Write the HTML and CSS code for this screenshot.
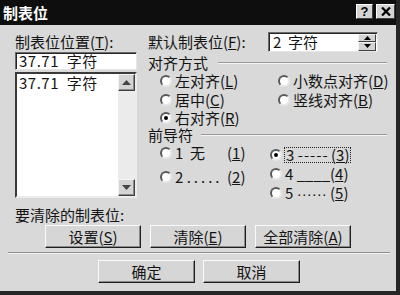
FILE: index.html
```html
<!DOCTYPE html>
<html lang="zh-CN">
<head>
<meta charset="utf-8">
<title>制表位</title>
<link rel="stylesheet" href="styles.css">
</head>
<body>
<div class="win">
  <div class="titlebar">
    <span class="title">制表位</span>
    <div class="tb-btns">
      <span class="tb-btn">?</span>
      <span class="tb-btn x">
        <svg width="10" height="9" viewBox="0 0 10 9"><path d="M1 0.5 L9 8.5 M9 0.5 L1 8.5" stroke="#000" stroke-width="2.2"/></svg>
      </span>
    </div>
  </div>
  <div class="body">
    <div class="top">
      <div class="left">
        <div class="lbl">制表位位置(<u>T</u>):</div>
        <div class="field">37.71&nbsp; 字符</div>
        <div class="listbox">
          <div class="items"><div class="item">37.71&nbsp; 字符</div></div>
          <div class="vscroll">
            <span class="sbtn"><svg width="9" height="5" viewBox="0 0 9 5"><path d="M4.5 0 L9 5 L0 5 Z" fill="#444"/></svg></span>
            <span class="track"></span>
            <span class="sbtn"><svg width="9" height="5" viewBox="0 0 9 5"><path d="M0 0 L9 0 L4.5 5 Z" fill="#444"/></svg></span>
          </div>
        </div>
      </div>
      <div class="right">
        <div class="defrow">
          <span class="deflbl">默认制表位(<u>F</u>):</span>
          <div class="spin">
            <span class="spinval">2&nbsp; 字符</span>
            <span class="spinbtns">
              <span class="spb"><svg width="7" height="4" viewBox="0 0 7 4"><path d="M3.5 0 L7 4 L0 4 Z" fill="#000"/></svg></span>
              <span class="spb"><svg width="7" height="4" viewBox="0 0 7 4"><path d="M0 0 L7 0 L3.5 4 Z" fill="#000"/></svg></span>
            </span>
          </div>
        </div>
        <div class="grphead"><span>对齐方式</span><span class="gline"></span></div>
        <div class="aligngrid">
          <div class="radio"><span class="rb"></span>左对齐(<u>L</u>)</div>
          <div class="radio c2"><span class="rb"></span>小数点对齐(<u>D</u>)</div>
          <div class="radio"><span class="rb"></span>居中(<u>C</u>)</div>
          <div class="radio c2"><span class="rb"></span>竖线对齐(<u>B</u>)</div>
          <div class="radio"><span class="rb on"></span>右对齐(<u>R</u>)</div>
        </div>
        <div class="grphead g2"><span>前导符</span><span class="gline"></span></div>
        <div class="leaders">
          <div class="lcol lc1">
            <div class="radio"><span class="rb"></span><span class="lt">1&nbsp; 无</span><span class="lk">(<u>1</u>)</span></div>
            <div class="radio"><span class="rb"></span><span class="lt">2 <span class="dots">.....</span></span><span class="lk">(<u>2</u>)</span></div>
          </div>
          <div class="lcol lc2">
            <div class="radio"><span class="rb on"></span><span class="focus"><span class="lt">3 <span class="dash">-----</span></span><span class="lk">(<u>3</u>)</span></span></div>
            <div class="radio"><span class="rb"></span><span class="lt">4 <span class="unds">____</span></span><span class="lk">(<u>4</u>)</span></div>
            <div class="radio"><span class="rb"></span><span class="lt">5 <span class="mdots">······</span></span><span class="lk">(<u>5</u>)</span></div>
          </div>
        </div>
      </div>
    </div>
    <div class="clrlbl">要清除的制表位:</div>
    <div class="btnrow">
      <span class="btn">设置(<u>S</u>)</span>
      <span class="btn">清除(<u>E</u>)</span>
      <span class="btn">全部清除(<u>A</u>)</span>
    </div>
    <div class="sep"></div>
    <div class="btnrow2">
      <span class="btn">确定</span>
      <span class="btn">取消</span>
    </div>
  </div>
</div>
</body>
</html>
```

FILE: styles.css
```css
* { box-sizing: border-box; }
html, body { margin: 0; padding: 0; }
body {
  background: #262626;
  width: 400px;
  height: 295px;
  overflow: hidden;
  font-family: "Noto Sans CJK SC", "Noto Sans", sans-serif;
  font-size: 15px;
  color: #141414;
}
u { text-decoration: underline; text-underline-offset: 1px; text-decoration-thickness: 1px; }
.win {
  width: 396px;
  height: 291px;
  background: #d9d9d9;
  display: flex;
  flex-direction: column;
}
.titlebar {
  height: 25px;
  background: #0e0e0e;
  display: flex;
  align-items: center;
  justify-content: space-between;
  padding: 0 1px 0 3px;
}
.title {
  color: #fff;
  font-weight: bold;
  font-size: 15px;
  line-height: 20px;
}
.tb-btns { display: flex; gap: 3px; margin-top: -2px; }
.tb-btn {
  width: 17px;
  height: 15px;
  background: #d4d4d4;
  border: 1px solid;
  border-color: #fff #404040 #404040 #fff;
  display: flex;
  align-items: center;
  justify-content: center;
  font-family: "Liberation Sans", sans-serif;
  font-weight: bold;
  font-size: 13px;
  line-height: 13px;
  color: #000;
}
.tb-btn.x { width: 19px; }
.body {
  flex: 1;
  padding-left: 15px;
  display: flex;
  flex-direction: column;
}
.top {
  height: 176px;
  display: flex;
}
.left {
  width: 122px;
  padding-top: 8px;
  display: flex;
  flex-direction: column;
}
.lbl { line-height: 18px; height: 18px; }
.field {
  margin-top: 1px;
  height: 18px;
  background: #fff;
  border: 1px solid;
  border-color: #6a6a6a #e6e6e6 #e6e6e6 #6a6a6a;
  box-shadow: inset 1px 1px 0 #262626;
  line-height: 16px;
  padding-left: 3px;
  letter-spacing: 0.5px;
}
.listbox {
  margin-top: 2px;
  height: 126px;
  background: #fff;
  border: 2px solid;
  border-color: #3a3a3a #ececec #ececec #3a3a3a;
  display: flex;
}
.items { flex: 1; padding: 1px 0 0 2px; letter-spacing: 0.5px; }
.item { line-height: 16px; }
.vscroll {
  width: 17px;
  display: flex;
  flex-direction: column;
  background: #ebebeb;
}
.track { flex: 1; }
.sbtn {
  height: 17px;
  background: #d4d4d4;
  border: 1px solid;
  border-color: #f4f4f4 #404040 #404040 #f4f4f4;
  box-shadow: inset -1px -1px 0 #8a8a8a;
  display: flex;
  align-items: center;
  justify-content: center;
}
.right {
  margin-left: 11px;
  width: 239px;
  display: flex;
  flex-direction: column;
}
.defrow {
  margin-top: 7px;
  height: 20px;
  display: flex;
  align-items: center;
}
.deflbl { width: 120px; line-height: 18px; }
.spin {
  width: 110px;
  height: 20px;
  background: #fff;
  border: 1px solid;
  border-color: #6a6a6a #e6e6e6 #e6e6e6 #6a6a6a;
  box-shadow: inset 1px 1px 0 #262626;
  display: flex;
  align-items: center;
  justify-content: space-between;
  padding: 1px 1px 1px 4px;
}
.spinval { line-height: 16px; }
.spinbtns { width: 18px; height: 17px; display: flex; flex-direction: column; }
.spb {
  flex: 1;
  background: #d4d4d4;
  border: 1px solid;
  border-color: #f4f4f4 #404040 #404040 #f4f4f4;
  display: flex;
  align-items: center;
  justify-content: center;
}
.grphead {
  margin-top: 3px;
  height: 16px;
  display: flex;
  align-items: center;
  line-height: 16px;
}
.gline {
  flex: 1;
  height: 2px;
  margin-left: 10px;
  border-top: 1px solid #9a9a9a;
  border-bottom: 1px solid #f4f4f4;
}
.aligngrid {
  display: grid;
  grid-template-columns: 120px 1fr;
  grid-template-rows: 19px 19px 18px;
  padding-left: 12px;
}
.radio {
  display: flex;
  align-items: center;
  line-height: 16px;
  white-space: pre;
}
.radio.c2 { margin-left: -2px; }
.rb {
  width: 12px;
  height: 12px;
  flex: none;
  margin-right: 3px;
  border-radius: 50%;
  background: #fff;
  border: 2px solid;
  border-color: #5a5a5a #e8e8e8 #e8e8e8 #5a5a5a;
  position: relative;
}
.rb.on::after {
  content: "";
  position: absolute;
  left: 2px;
  top: 2px;
  width: 4px;
  height: 4px;
  border-radius: 50%;
  background: #000;
}
.grphead.g2 { margin-top: 0; }
.grphead.g2 .gline { margin-left: 8px; }
.leaders { display: flex; padding-left: 12px; }
.lcol { display: flex; flex-direction: column; }
.lc1 { width: 110px; gap: 4px; }
.lc1 .radio { height: 20px; }
.lc2 { padding-top: 3px; gap: 1px; }
.lc2 .radio { height: 18px; }
.lt { display: inline-block; width: 52px; white-space: pre; }
.lc2 .lt { width: 45px; }
.dots { letter-spacing: 3px; }
.dash { letter-spacing: 1px; }
.unds { letter-spacing: 0; }
.mdots { font-family: "Liberation Sans", sans-serif; letter-spacing: 0; }
.focus { display: flex; border: 1px dotted #222; padding: 0 1px; margin-left: -1px; height: 16px; align-items: center; }
.clrlbl { margin-top: 5px; line-height: 18px; height: 18px; }
.btnrow {
  margin-top: 1px;
  margin-left: 30px;
  display: flex;
  gap: 9px;
}
.btn {
  width: 96px;
  height: 23px;
  background: #d6d6d6;
  border: 1px solid;
  border-color: #fafafa #1e1e1e #1e1e1e #fafafa;
  box-shadow: inset -1px -1px 0 #8a8a8a;
  display: flex;
  align-items: center;
  justify-content: center;
  line-height: 18px;
}
.sep {
  margin-top: 4px;
  margin-left: -7px;
  width: 382px;
  height: 2px;
  border-top: 1px solid #8e8e8e;
  border-bottom: 1px solid #f4f4f4;
}
.btnrow2 {
  margin-top: 6px;
  margin-left: 83px;
  display: flex;
  gap: 8px;
}
.btnrow2 .btn { width: 97px; }
```
